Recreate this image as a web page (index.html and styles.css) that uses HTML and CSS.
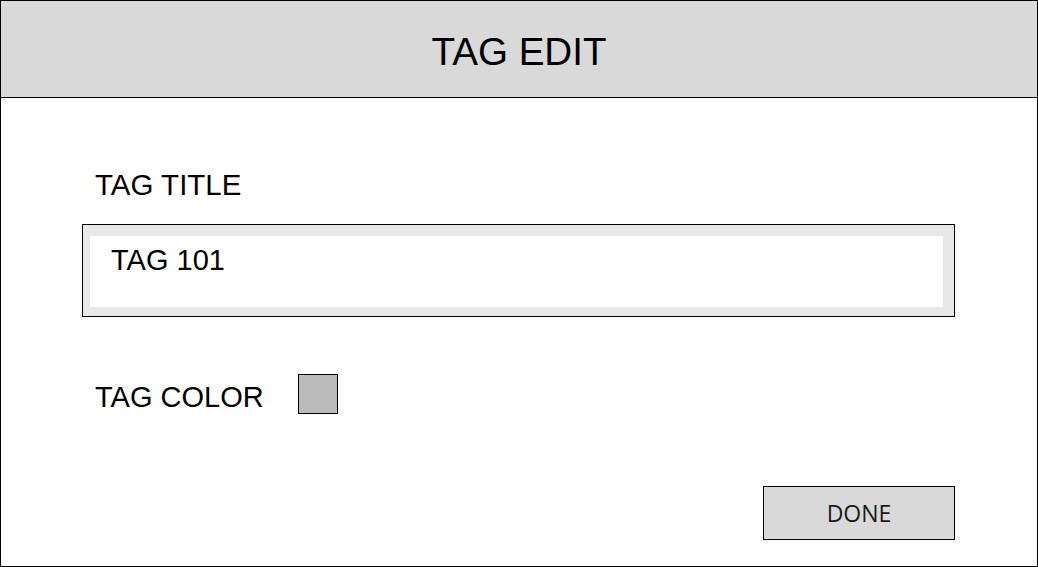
FILE: index.html
```html
<!DOCTYPE html>
<html>
<head>
<meta charset="utf-8">
<link rel="stylesheet" href="styles.css">
</head>
<body>
<div class="dialog">
  <header class="dialog-header">
    <h1 class="dialog-title">TAG EDIT</h1>
  </header>
  <main class="dialog-body">
    <label class="field-label">TAG TITLE</label>
    <div class="input-frame">
      <div class="input-inner">TAG 101</div>
    </div>
    <div class="color-row">
      <span class="color-label">TAG COLOR</span>
      <span class="color-swatch"></span>
    </div>
    <div class="actions">
      <button class="done-btn">DONE</button>
    </div>
  </main>
</div>
</body>
</html>
```
FILE: styles.css
```css
* { box-sizing: border-box; }
html, body { margin: 0; padding: 0; background: #fff; }
body { font-family: "Liberation Sans", Arial, sans-serif; color: #000; }

.dialog {
  width: 1038px;
  height: 567px;
  border: 1px solid #000;
  display: flex;
  flex-direction: column;
}

.dialog-header {
  height: 97px;
  flex: none;
  background: #d9d9d9;
  border-bottom: 1px solid #000;
  display: flex;
  align-items: center;
  justify-content: center;
}

.dialog-title {
  margin: 0;
  font-weight: 400;
  font-size: 38.6px;
  line-height: 48px;
  padding-top: 6px;
}

.dialog-body {
  flex: 1;
  display: flex;
  flex-direction: column;
  padding: 0 82px 0 81px;
}

.field-label {
  display: block;
  margin-top: 71px;
  padding-left: 13px;
  font-size: 29.5px;
  line-height: 32px;
}

.input-frame {
  margin-top: 23px;
  border: 1px solid #000;
  background: #e8e8e8;
  padding: 11px 11px 9px 7px;
}

.input-inner {
  background: #fff;
  height: 71px;
  padding: 8px 0 0 21px;
  font-size: 29px;
  line-height: 32px;
}

.color-row {
  margin-top: 57px;
  display: flex;
  align-items: center;
  padding-left: 13px;
}

.color-label {
  font-size: 29px;
  line-height: 32px;
  padding-top: 6px;
}

.color-swatch {
  width: 40px;
  height: 40px;
  margin-left: 34px;
  background: #bbbbbb;
  border: 1px solid #000;
}

.actions {
  margin-top: 72px;
  display: flex;
  justify-content: flex-end;
}

.done-btn {
  width: 192px;
  height: 54px;
  background: #d9d9d9;
  border: 1px solid #000;
  border-radius: 0;
  font-family: "Open Sans", "Liberation Sans", sans-serif;
  font-size: 23px;
  color: #1a1a1a;
  padding: 0;
  line-height: 1;
}
```
